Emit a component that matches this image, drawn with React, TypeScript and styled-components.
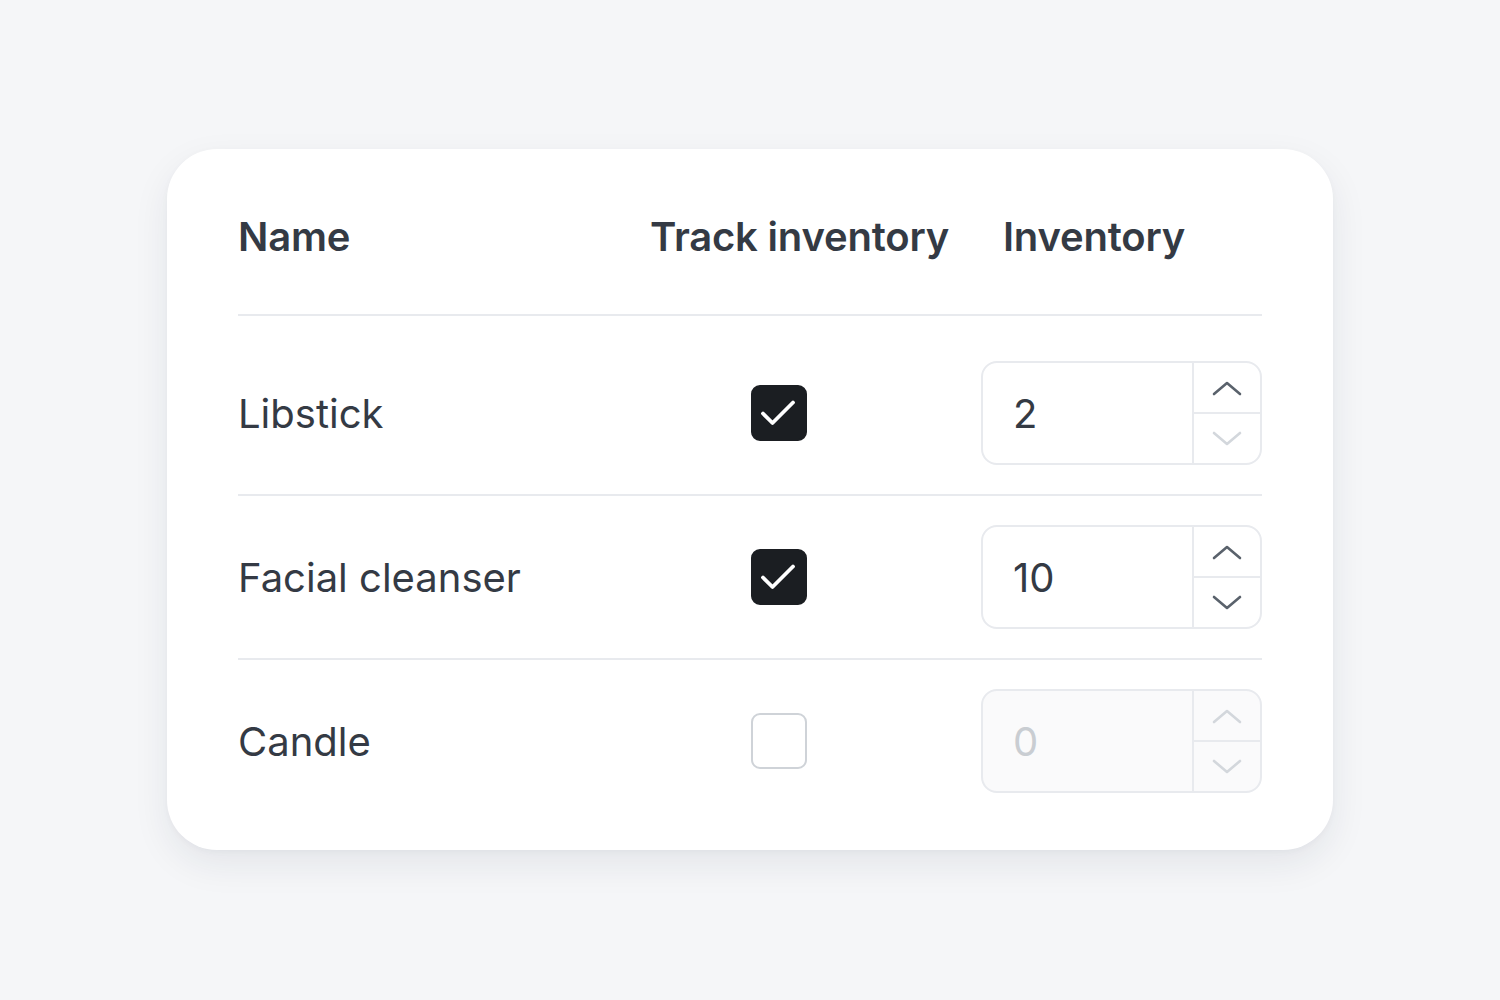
import React from 'react';
import styled, { createGlobalStyle } from 'styled-components';

const colors = {
  page: '#f5f6f8',
  card: '#ffffff',
  text: '#343a44',
  line: '#e8eaee',
  checked: '#1b1e22',
  arrow: '#5a626c',
  muted: '#d3d7dc',
  disabledBg: '#fafafb',
};

interface Product {
  name: string;
  tracked: boolean;
  inventory: number;
}

const products: Product[] = [
  { name: 'Libstick', tracked: true, inventory: 2 },
  { name: 'Facial cleanser', tracked: true, inventory: 10 },
  { name: 'Candle', tracked: false, inventory: 0 },
];

function Chevron({ up, faded }: { up?: boolean; faded?: boolean }) {
  return (
    <svg width="30" height="16" viewBox="0 0 30 16" fill="none">
      <path
        d={up ? 'M2 14L15 3l13 11' : 'M2 2l13 11 13-11'}
        stroke={faded ? colors.muted : colors.arrow}
        strokeWidth="2.6"
        strokeLinecap="round"
        strokeLinejoin="round"
      />
    </svg>
  );
}

function App() {
  return (
    <>
      <GlobalStyle />
      <Page>
        <Card>
          <Table>
            <HeadCell>Name</HeadCell>
            <HeadCell>Track inventory</HeadCell>
            <HeadCell $inset>Inventory</HeadCell>
            {products.map((p, i) => (
              <Row key={p.name} $first={i === 0}>
                <NameCell>{p.name}</NameCell>
                <CheckCell>
                  <Checkbox $checked={p.tracked}>
                    {p.tracked && (
                      <svg width="40" height="40" viewBox="0 0 40 40" fill="none">
                        <path
                          d="M4 20.5l9.5 9.5L34 9.5"
                          stroke="#fff"
                          strokeWidth="3.8"
                          strokeLinecap="round"
                          strokeLinejoin="round"
                        />
                      </svg>
                    )}
                  </Checkbox>
                </CheckCell>
                <div>
                  <NumberInput $disabled={!p.tracked}>
                    <Value $disabled={!p.tracked}>{p.inventory}</Value>
                    <Spinner>
                      <Step>
                        <Chevron up faded={!p.tracked} />
                      </Step>
                      <Step>
                        <Chevron faded={!p.tracked || p.inventory <= 2} />
                      </Step>
                    </Spinner>
                  </NumberInput>
                </div>
              </Row>
            ))}
          </Table>
        </Card>
      </Page>
    </>
  );
}

export default App;

const GlobalStyle = createGlobalStyle`
  * { box-sizing: border-box; }
  body {
    margin: 0;
    background: ${colors.page};
    font-family: Inter, 'Liberation Sans', sans-serif;
  }
`;
const Page = styled.div`
  width: 1500px;
  height: 1000px;
  padding: 149px 167px 0;
`;
const Card = styled.div`
  width: 1166px;
  height: 701px;
  background: ${colors.card};
  border-radius: 50px;
  padding: 56px 71px 28px;
  box-shadow: 0 14px 36px rgba(30, 40, 60, 0.08), 0 2px 6px rgba(30, 40, 60, 0.03);
`;
const Table = styled.div`
  display: grid;
  grid-template-columns: 1fr 331px 281px;
`;
const HeadCell = styled.div<{ $inset?: boolean }>`
  font-size: 40px;
  line-height: 64px;
  font-weight: 600;
  color: ${colors.text};
  letter-spacing: -0.2px;
  padding: 0 0 45px ${(p) => (p.$inset ? '22px' : '0')};
  border-bottom: 2px solid ${colors.line};
`;
const Row = styled.div<{ $first?: boolean }>`
  grid-column: 1 / -1;
  display: grid;
  grid-template-columns: subgrid;
  align-items: center;
  padding: ${(p) => (p.$first ? '45px' : '29px')} 0 29px;
  border-bottom: 2px solid ${colors.line};
  &:last-child {
    border-bottom: none;
  }
`;
const NameCell = styled.div`
  font-size: 40px;
  color: ${colors.text};
`;
const CheckCell = styled.div`
  padding-left: 101px;
`;
const Checkbox = styled.div<{ $checked: boolean }>`
  width: 56px;
  height: 56px;
  border-radius: 9px;
  display: flex;
  align-items: center;
  justify-content: center;
  background: ${(p) => (p.$checked ? colors.checked : '#fff')};
  border: 2px solid ${(p) => (p.$checked ? colors.checked : '#cfd3d8')};
`;
const NumberInput = styled.div<{ $disabled: boolean }>`
  width: 281px;
  height: 104px;
  display: flex;
  border: 2px solid ${colors.line};
  border-radius: 16px;
  overflow: hidden;
  background: ${(p) => (p.$disabled ? colors.disabledBg : '#fff')};
`;
const Value = styled.div<{ $disabled: boolean }>`
  flex: 1;
  display: flex;
  align-items: center;
  padding-left: 30px;
  font-size: 40px;
  color: ${(p) => (p.$disabled ? '#c9cdd2' : colors.text)};
`;
const Spinner = styled.div`
  width: 68px;
  display: flex;
  flex-direction: column;
  border-left: 2px solid ${colors.line};
`;
const Step = styled.div`
  flex: 1;
  display: flex;
  align-items: center;
  justify-content: center;
  & + & {
    border-top: 2px solid ${colors.line};
  }
`;
